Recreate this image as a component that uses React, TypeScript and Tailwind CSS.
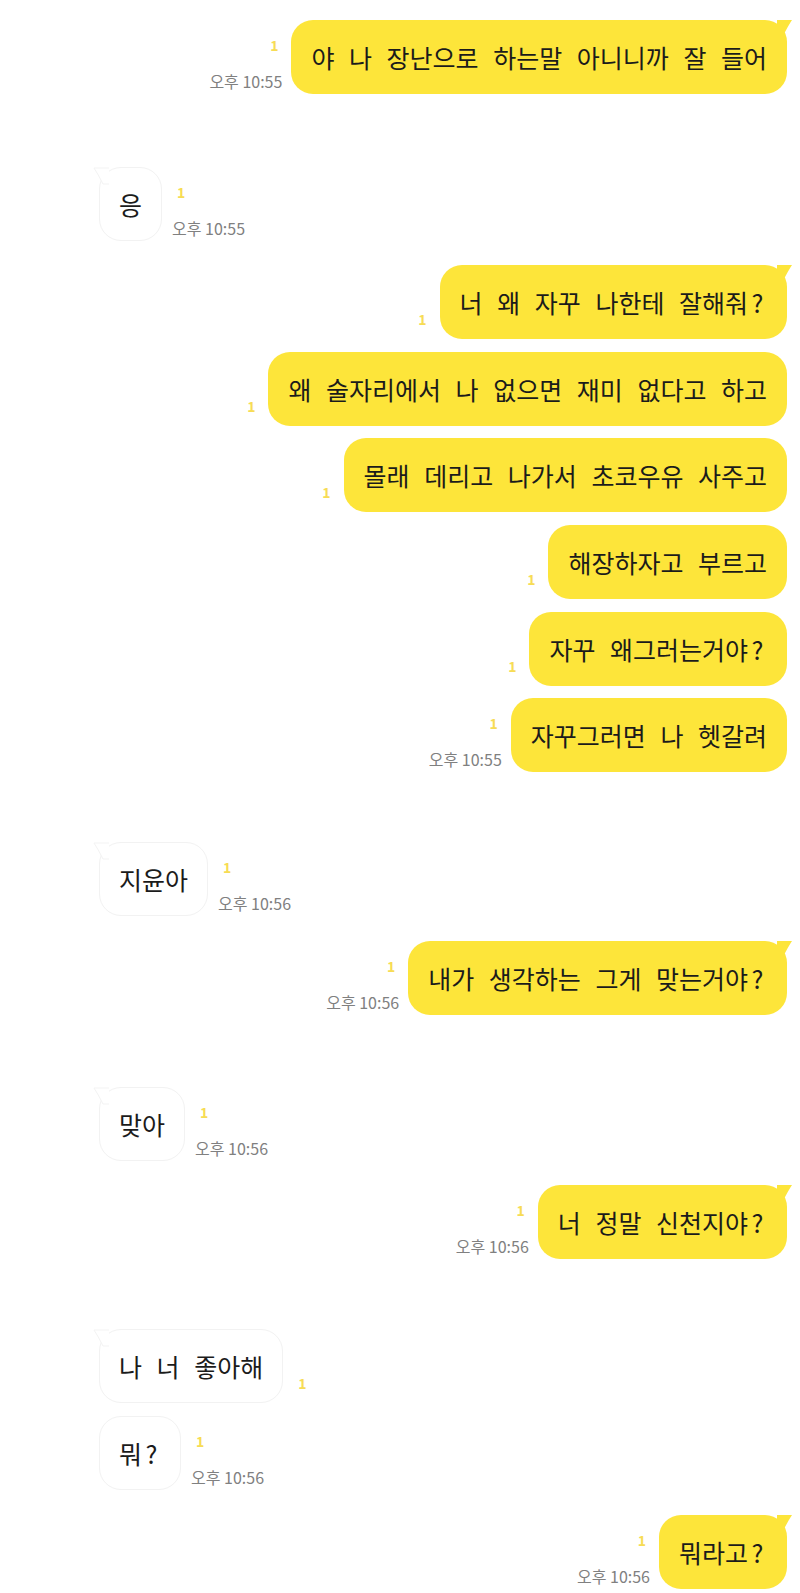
import React from 'react'

type Msg = {
  text: string
  mine: boolean
  time?: string
  tail?: boolean
  mt: string
}

const messages: Msg[] = [
  { text: '야 나 장난으로 하는말 아니니까 잘 들어', mine: true, time: '오후 10:55', tail: true, mt: 'mt-[20px]' },
  { text: '응', mine: false, time: '오후 10:55', tail: true, mt: 'mt-[73px]' },
  { text: '너 왜 자꾸 나한테 잘해줘?', mine: true, tail: true, mt: 'mt-[24px]' },
  { text: '왜 술자리에서 나 없으면 재미 없다고 하고', mine: true, mt: 'mt-[13px]' },
  { text: '몰래 데리고 나가서 초코우유 사주고', mine: true, mt: 'mt-[12px]' },
  { text: '해장하자고 부르고', mine: true, mt: 'mt-[13px]' },
  { text: '자꾸 왜그러는거야?', mine: true, mt: 'mt-[13px]' },
  { text: '자꾸그러면 나 헷갈려', mine: true, time: '오후 10:55', mt: 'mt-[12px]' },
  { text: '지윤아', mine: false, time: '오후 10:56', tail: true, mt: 'mt-[70px]' },
  { text: '내가 생각하는 그게 맞는거야?', mine: true, time: '오후 10:56', tail: true, mt: 'mt-[25px]' },
  { text: '맞아', mine: false, time: '오후 10:56', tail: true, mt: 'mt-[72px]' },
  { text: '너 정말 신천지야?', mine: true, time: '오후 10:56', tail: true, mt: 'mt-[24px]' },
  { text: '나 너 좋아해', mine: false, tail: true, mt: 'mt-[70px]' },
  { text: '뭐?', mine: false, time: '오후 10:56', mt: 'mt-[13px]' },
  { text: '뭐라고?', mine: true, time: '오후 10:56', tail: true, mt: 'mt-[25px]' },
]

const FONT = "font-['Noto_Sans_CJK_KR','Noto_Sans',sans-serif]"

// unread count, drawn small and yellow like in the chat app
function Unread() {
  return <span className="text-[14px] font-bold leading-[14px] text-[#f7dc55]">1</span>
}

function Meta({ time, mine }: { time?: string; mine: boolean }) {
  return (
    <div
      className={`flex h-full flex-col justify-end ${mine ? 'items-end' : 'items-start'} ${
        time ? 'pb-[3px]' : 'pb-[9px]'
      }`}
    >
      <div className={`${time ? 'mb-[15px]' : ''} ${mine ? 'mr-[4px]' : 'ml-[5px]'}`}>
        <Unread />
      </div>
      {time && (
        <span className="whitespace-nowrap text-[16px] leading-[20px] text-[#808080]">{time}</span>
      )}
    </div>
  )
}

// the handwritten "?" in the original is wider than the system one
function Text({ text }: { text: string }) {
  if (!text.endsWith('?')) return <>{text}</>
  return (
    <>
      {text.slice(0, -1)}
      <span className="inline-block w-[19px] text-center">?</span>
    </>
  )
}

function Bubble({ msg }: { msg: Msg }) {
  return (
    <div
      className={`relative h-[74px] whitespace-nowrap rounded-[22px] text-[25px] leading-[32px] text-[#1b1b1b] [word-spacing:9px] ${
        msg.mine ? 'bg-[#fde53a] px-[20px] py-[21px]' : 'border border-[#f2f2f2] bg-white px-[19px] py-[20px]'
      }`}
    >
      {msg.tail && msg.mine && (
        <svg className="absolute -right-[6px] top-0" width="16" height="18" viewBox="0 0 16 18">
          <path d="M0 0 L15 0 Q11 6 6 16 L0 16 Z" fill="#fde53a" />
        </svg>
      )}
      {msg.tail && !msg.mine && (
        <svg className="absolute -left-[7px] -top-[1px]" width="16" height="18" viewBox="0 0 16 18">
          <path d="M16 1 L1 1 Q5 7 10 17 L16 17" fill="white" stroke="#f3f3f3" strokeWidth="1" />
        </svg>
      )}
      <Text text={msg.text} />
    </div>
  )
}

export default function App() {
  return (
    <div className={`min-h-screen w-[800px] bg-white pb-[4px] ${FONT}`}>
      {messages.map((m, i) =>
        m.mine ? (
          <div key={i} className={`flex h-[74px] items-stretch justify-end gap-[9px] pr-[13px] ${m.mt}`}>
            <Meta time={m.time} mine />
            <Bubble msg={m} />
          </div>
        ) : (
          <div key={i} className={`flex h-[74px] items-stretch justify-start gap-[10px] pl-[99px] ${m.mt}`}>
            <Bubble msg={m} />
            <Meta time={m.time} mine={false} />
          </div>
        )
      )}
    </div>
  )
}
